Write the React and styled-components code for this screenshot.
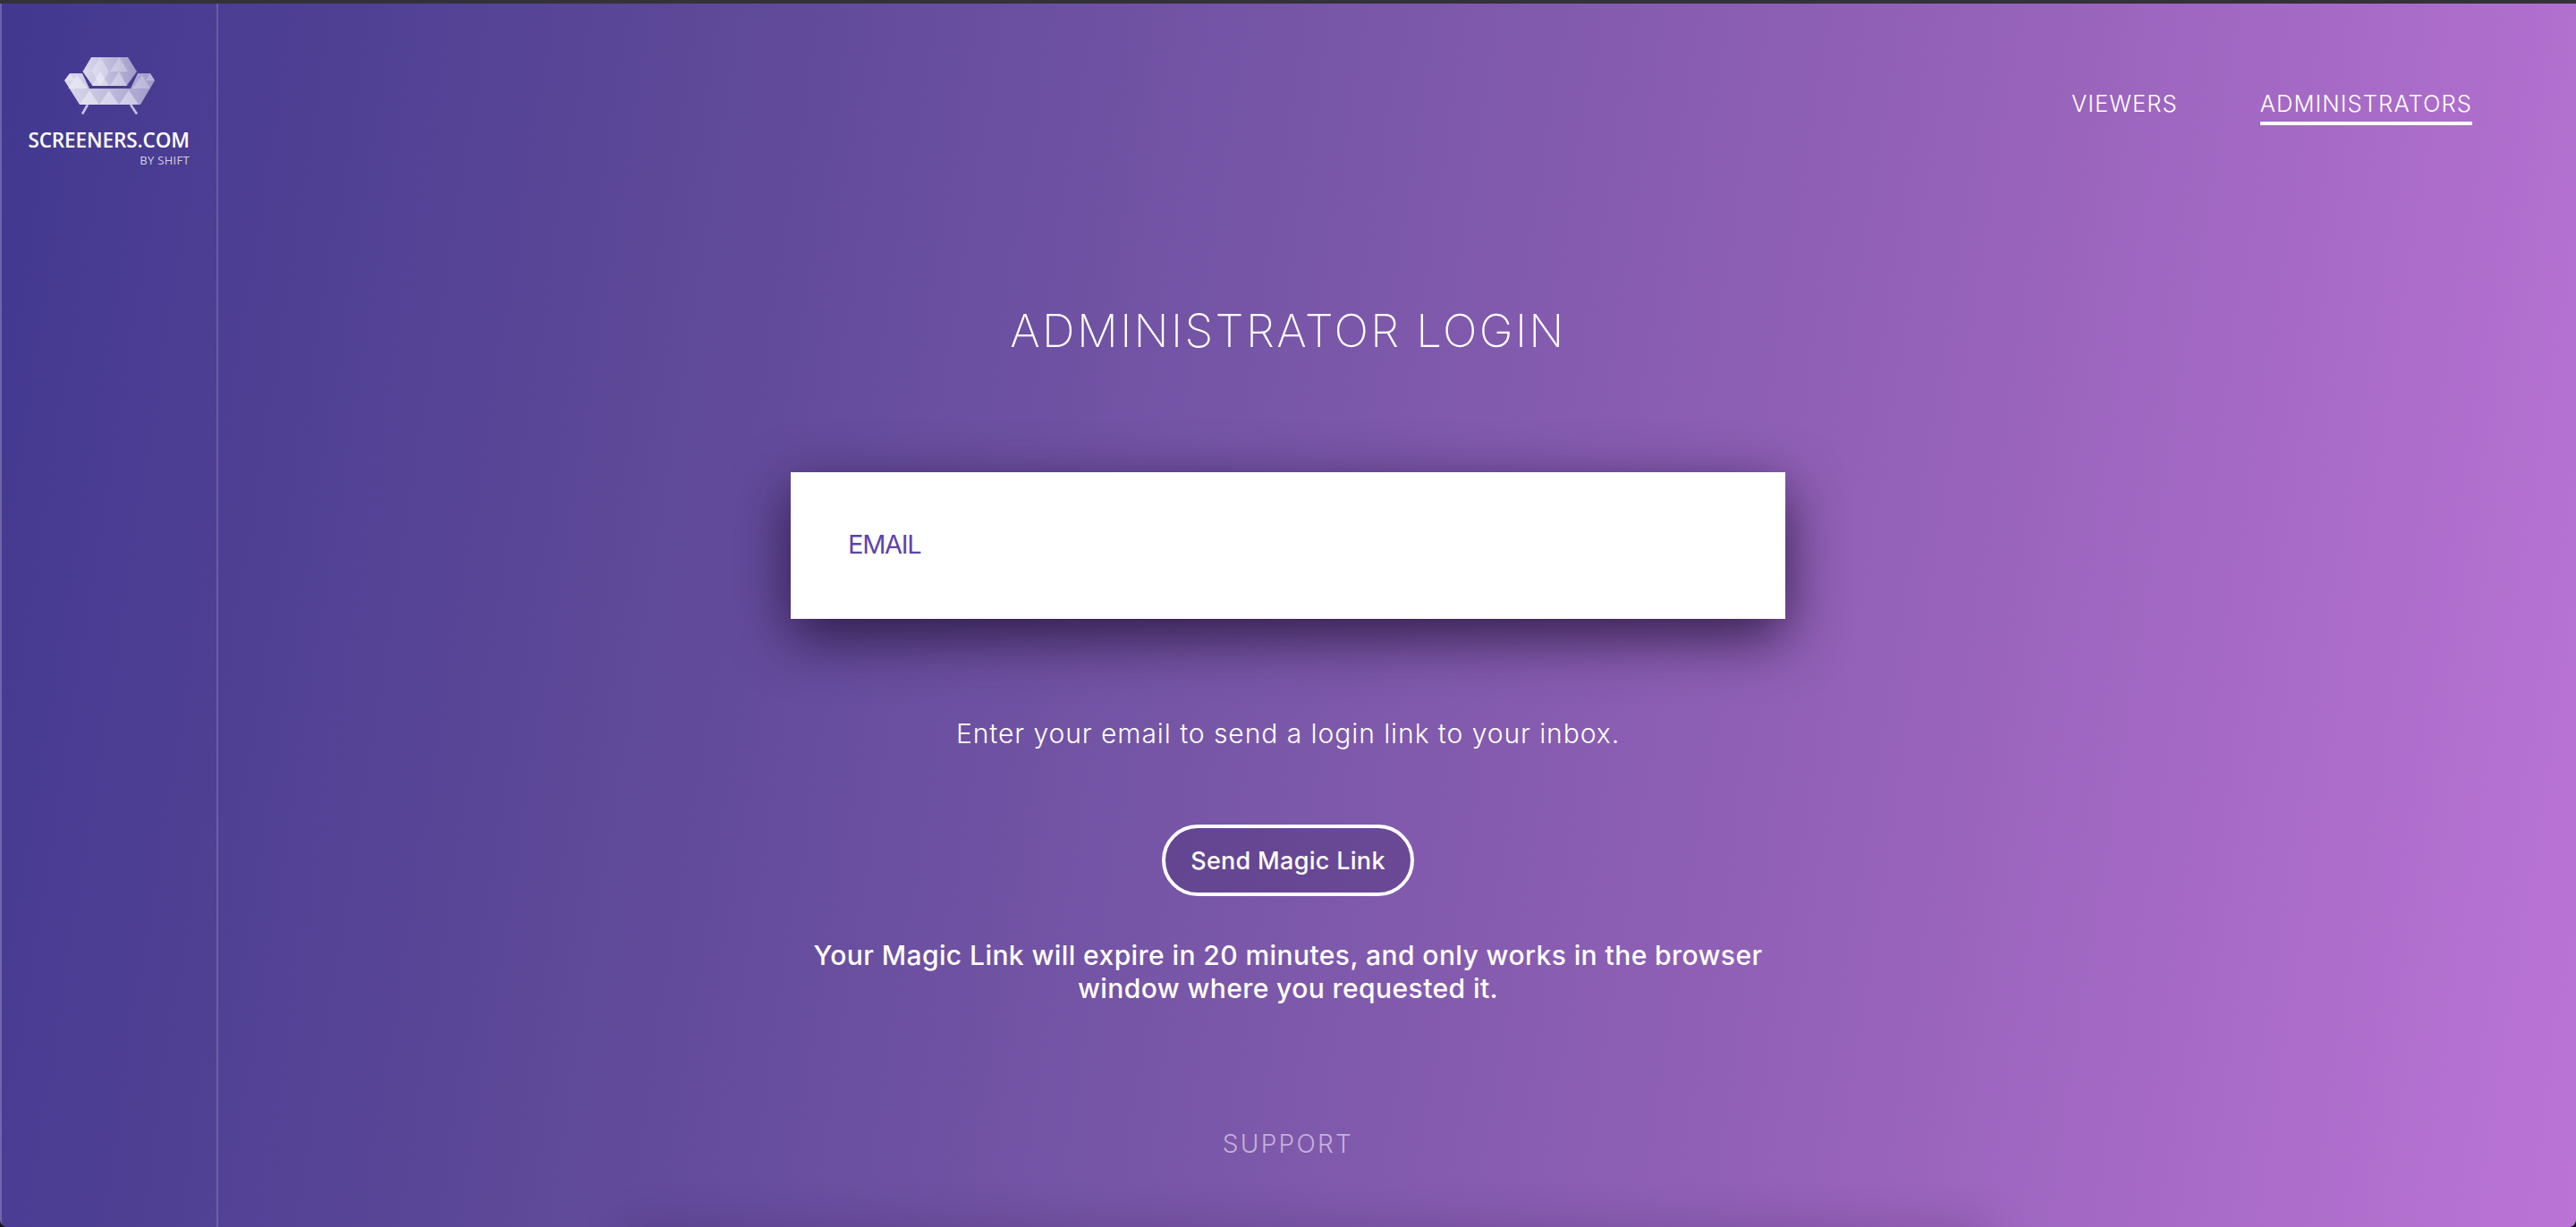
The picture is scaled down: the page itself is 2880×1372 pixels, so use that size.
import React from 'react';
import styled, { createGlobalStyle } from 'styled-components';

const GlobalStyle = createGlobalStyle`
    html, body, #root {
        margin: 0;
        height: 100%;
    }

    body {
        font-family: "Inter", "Liberation Sans", sans-serif;
        color: #fff;
        background: #17151c;
        overflow: hidden;
    }
`;

const Page = styled.div`
    position: relative;
    height: 1372px;
    box-sizing: border-box;
    display: flex;
    overflow: hidden;
    border-top: 4px solid #333238;
    border-radius: 0 0 8px 8px;
    background: linear-gradient(99deg, #423890 0%, #5d4898 25%, #7a57a9 50%, #9562b9 72%, #bb74d6 100%);

    /* shadow of the next panel, just under the fold */
    &::after {
        content: '';
        position: absolute;
        left: 700px;
        right: 660px;
        top: 100%;
        height: 40px;
        box-shadow: 0 0 50px rgba(40, 22, 70, 0.24);
    }
`;

const Sidebar = styled.aside`
    width: 244px;
    flex: none;
    box-sizing: border-box;
    border-left: 2px solid rgba(255, 255, 255, 0.22);
    border-right: 2px solid rgba(255, 255, 255, 0.16);
    display: flex;
    flex-direction: column;
    align-items: flex-end;
    padding: 60px 30px 0 0;
`;

const LogoMark = styled.svg`
    width: 101px;
    height: 64px;
    margin: 0 0 16px 70px;
    align-self: flex-start;
`;

const LogoName = styled.div`
    font-family: "Open Sans", "Liberation Sans", sans-serif;
    font-weight: 600;
    font-size: 22.5px;
    line-height: 26px;
    letter-spacing: -0.1px;
`;

const LogoSub = styled.div`
    margin-top: 2px;
    font-family: "Open Sans", "Liberation Sans", sans-serif;
    font-size: 13px;
    line-height: 14px;
    letter-spacing: 0.3px;
    color: rgba(255, 255, 255, 0.75);
`;

const Main = styled.main`
    flex: 1;
    display: flex;
    flex-direction: column;
    align-items: center;
    margin-left: -244px;
`;

const Nav = styled.nav`
    align-self: flex-end;
    display: flex;
    gap: 92px;
    padding: 94px 116px 0 0;
`;

const NavLink = styled.a`
    font-size: 25.5px;
    font-weight: 300;
    line-height: 36px;
    letter-spacing: 1.1px;
    padding-bottom: 2px;
    border-bottom: 4px solid ${(p) => (p.$active ? '#fff' : 'transparent')};
`;

const Title = styled.h1`
    margin: 200px 0 0;
    font-size: 51px;
    font-weight: 200;
    line-height: 60px;
    letter-spacing: 2.4px;
`;

const EmailCard = styled.div`
    width: 1112px;
    height: 164px;
    margin-top: 128px;
    box-sizing: border-box;
    padding: 0 64px 4px;
    display: flex;
    align-items: center;
    background: #fff;
    box-shadow: 0 20px 64px rgba(30, 15, 50, 0.82);
`;

const EmailLabel = styled.label`
    font-size: 29px;
    color: #5f42ae;
    letter-spacing: -1.3px;
`;

const Hint = styled.p`
    margin: 108px 0 0;
    font-size: 30px;
    font-weight: 300;
    line-height: 40px;
    letter-spacing: 0.95px;
`;

const SendButton = styled.button`
    width: 282px;
    height: 80px;
    margin-top: 82px;
    box-sizing: border-box;
    border: 4px solid #fff;
    border-radius: 40px;
    background: rgba(50, 30, 90, 0.28);
    color: #fff;
    font-family: inherit;
    font-size: 27px;
    font-weight: 500;
    letter-spacing: 0.3px;
`;

const Note = styled.p`
    width: 1120px;
    margin: 48px 0 0;
    text-align: center;
    font-size: 30px;
    font-weight: 500;
    line-height: 36.5px;
    letter-spacing: 0.42px;
`;

const Support = styled.a`
    margin-top: 138px;
    font-size: 28px;
    font-weight: 300;
    line-height: 36px;
    letter-spacing: 2.3px;
    color: rgba(255, 255, 255, 0.55);
`;

// coordinates are page pixels, the viewBox starts where the logo starts
const Logo = () => (
    <LogoMark viewBox="72 64 101 64">
        <defs>
            <linearGradient id="couch" x1="0" x2="1" y1="0" y2="0">
                <stop offset="0" stopColor="#dcdaee" />
                <stop offset="1" stopColor="#9f9bc9" />
            </linearGradient>
        </defs>
        <path stroke="#c5c2e0" strokeWidth="2.6" d="M98 117 L92 127.5 M146 117 L153 127.5" />
        <path fill="url(#couch)" d="M102 64 H143 L153 80 L141.5 96 H103.5 L92.5 80 Z" />
        <path fill="url(#couch)" d="M72 90 L78 82 H92 L100 99 H146 L154 82 H168 L173 90 L157 117 H89 Z" />
        <path fill="#fff" fillOpacity="0.28" d="M112 64 L122 80 H102 Z M133 64 L143 80 H123 Z M112 96 L122 80 L103 80 Z" />
        <path fill="#fff" fillOpacity="0.36" d="M112 80 L122 96 H103 Z M133 80 L142 96 H123 Z" />
        <path fill="#fff" fillOpacity="0.4" d="M86 84 L98 99 H76 Z M100 101 L111 117 H89 Z M122 101 L133 117 H111 Z M144 101 L155 117 H133 Z" />
        <path fill="#fff" fillOpacity="0.25" d="M78 82 L84 90 H72 Z M168 82 L173 90 H163 Z M159 84 L168 99 H148 Z" />
    </LogoMark>
);

export default function App() {
    return (
        <>
            <GlobalStyle />
            <Page>
                <Sidebar>
                    <Logo />
                    <LogoName>SCREENERS.COM</LogoName>
                    <LogoSub>BY SHIFT</LogoSub>
                </Sidebar>
                <Main>
                    <Nav>
                        <NavLink>VIEWERS</NavLink>
                        <NavLink $active>ADMINISTRATORS</NavLink>
                    </Nav>
                    <Title>ADMINISTRATOR LOGIN</Title>
                    <EmailCard>
                        <EmailLabel>EMAIL</EmailLabel>
                    </EmailCard>
                    <Hint>Enter your email to send a login link to your inbox.</Hint>
                    <SendButton>Send Magic Link</SendButton>
                    <Note>Your Magic Link will expire in 20 minutes, and only works in the browser window where you requested it.</Note>
                    <Support>SUPPORT</Support>
                </Main>
            </Page>
        </>
    );
}
